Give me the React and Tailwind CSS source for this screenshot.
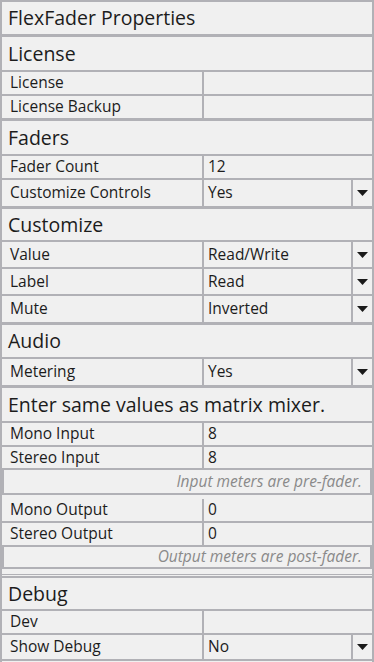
import React from 'react';

const font = { fontFamily: '"Open Sans", "Noto Sans", sans-serif' };

const Arrow = () => (
  <svg width="11" height="6" viewBox="0 0 11 6" className="block">
    <path d="M0 0 H11 L5.5 6 Z" fill="#1a1a1a" />
  </svg>
);

// section headers, heights taken from the screenshot
const Header = ({ children, h = 'h-[35px]', line = 'border-b-2' }) => (
  <div className={`${h} ${line} border-[#b1b1b6] flex items-center pl-1.5 text-[19.5px] text-[#1c1c1c]`}>
    {children}
  </div>
);

const Row = ({ label, value = '', dropdown = false, h = 'h-[24px]', line = 'border-b-2' }) => (
  <div className={`${h} ${line} border-[#b1b1b6] flex text-[15.5px] text-[#1c1c1c]`}>
    <div className="w-[200px] pl-2 flex items-center">{label}</div>
    <div className="flex-1 border-l-2 border-[#b1b1b6] pl-1 flex items-center">{value}</div>
    {dropdown && (
      <div className="w-[21px] border-l-2 border-[#b1b1b6] flex items-center justify-center">
        <Arrow />
      </div>
    )}
  </div>
);

const Note = ({ children, h = 'h-[25px]' }) => (
  <div className={`${h} border-2 border-t-0 border-[#b1b1b6] flex items-center justify-end pr-2 text-[15.5px] italic text-[#8a8a8a]`}>
    {children}
  </div>
);

export default function App() {
  return (
    <div style={font} className="w-[374px] h-[662px] overflow-hidden bg-[#f0f0f0] border-t-2 border-l-2 border-r-2 border-[#b1b1b6]">
      <Header line="border-b-[3px]">FlexFader Properties</Header>

      <Header>License</Header>
      <Row label="License" />
      <Row label="License Backup" h="h-[25px]" line="border-b-[3px]" />

      <Header>Faders</Header>
      <Row label="Fader Count" value="12" />
      <Row label="Customize Controls" value="Yes" dropdown h="h-[29px]" line="border-b-[3px]" />

      <Header h="h-[33px]">Customize</Header>
      <Row label="Value" value="Read/Write" dropdown h="h-[27px]" />
      <Row label="Label" value="Read" dropdown h="h-[27px]" />
      <Row label="Mute" value="Inverted" dropdown h="h-[29px]" line="border-b-[3px]" />

      <Header h="h-[34px]">Audio</Header>
      <Row label="Metering" value="Yes" dropdown h="h-[29px]" line="border-b-[3px]" />

      <Header>Enter same values as matrix mixer.</Header>
      <Row label="Mono Input" value="8" />
      <Row label="Stereo Input" value="8" h="h-[23px]" />
      <Note>Input meters are pre-fader.</Note>
      <div className="h-[4px]" />
      <Row label="Mono Output" value="0" />
      <Row label="Stereo Output" value="0" />
      <Note h="h-[22px]">Output meters are post-fader.</Note>
      <div className="h-[6px] border-b border-[#b1b1b6]" />
      <div className="h-[3px] border-b-2 border-[#b1b1b6]" />

      <Header h="h-[33px]">Debug</Header>
      <Row label="Dev" />
      <Row label="Show Debug" value="No" dropdown h="h-[26px]" />
    </div>
  );
}
